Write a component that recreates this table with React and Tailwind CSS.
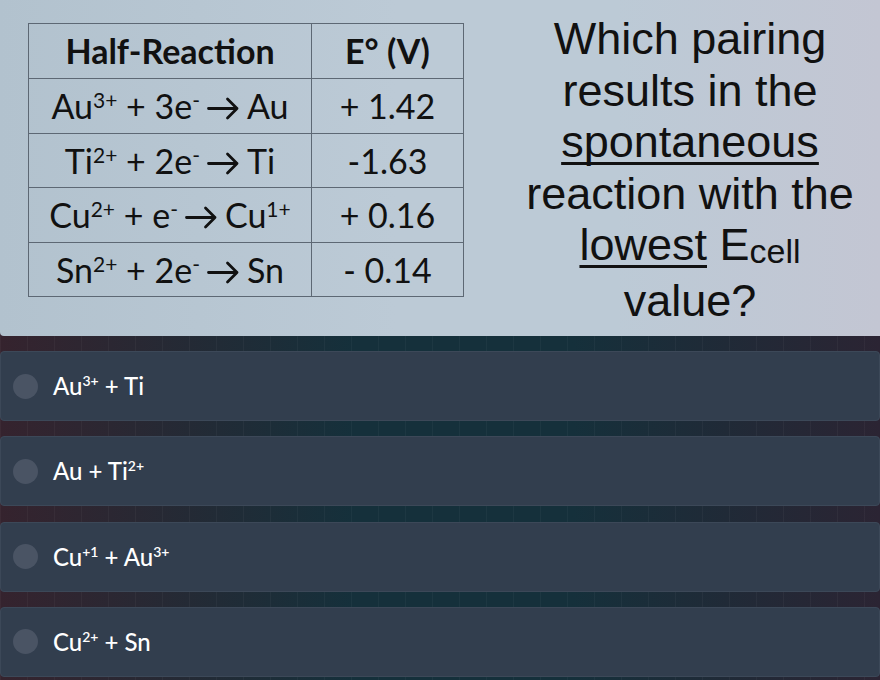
import React from 'react';

const Arrow = () => (
  <svg width="33" height="23" viewBox="0 0 33 23" className="inline-block mx-[7px] align-[-1px]">
    <path d="M1.5 11.5H30M20.5 2L30 11.5 20.5 21" fill="none" stroke="#111" strokeWidth="2.8" strokeLinecap="round" strokeLinejoin="round" />
  </svg>
);

const Sup = ({ children }) => (
  <sup className="text-[21px] relative top-[-11px] align-baseline leading-none">{children}</sup>
);

const rows = [
  { r: <>Au<Sup>3+</Sup> + 3e<Sup>-</Sup><Arrow />Au</>, v: '+ 1.42' },
  { r: <>Ti<Sup>2+</Sup> + 2e<Sup>-</Sup><Arrow />Ti</>, v: '-1.63' },
  { r: <>Cu<Sup>2+</Sup> + e<Sup>-</Sup><Arrow />Cu<Sup>1+</Sup></>, v: '+ 0.16' },
  { r: <>Sn<Sup>2+</Sup> + 2e<Sup>-</Sup><Arrow />Sn</>, v: '- 0.14' },
];

const OSup = ({ children }) => (
  <sup className="text-[14px] relative top-[-9px] align-baseline leading-none font-semibold">{children}</sup>
);

const options = [
  <>Au<OSup>3+</OSup> + Ti</>,
  <>Au + Ti<OSup>2+</OSup></>,
  <>Cu<OSup>+1</OSup> + Au<OSup>3+</OSup></>,
  <>Cu<OSup>2+</OSup> + Sn</>,
];

export default function App() {
  return (
    <div className="w-[880px] h-[680px] overflow-hidden bg-[image:repeating-linear-gradient(90deg,rgba(255,255,255,0.035)_0_1px,transparent_1px_27px),linear-gradient(90deg,#35232e,#15303b_40%,#15303b_65%,#2b2433)]">
      {/* slide picture */}
      <div className="h-[336px] flex rounded-bl-[4px] bg-[linear-gradient(90deg,#b2c2ce,#bccad6_45%,#bccad6_70%,#c3c6d3)]">
        <div className="pl-[28px] pt-[23px] font-['Lato',sans-serif] text-[#111]">
          <table className="border-collapse border-[1.5px] border-[#5d6874]">
            <thead>
              <tr className="h-[55px]">
                <th className="w-[283px] border-[1.5px] border-[#5d6874] text-[34px] font-bold leading-none">Half-Reaction</th>
                <th className="w-[152px] border-[1.5px] border-[#5d6874] text-[34px] font-bold leading-none">E° (V)</th>
              </tr>
            </thead>
            <tbody>
              {rows.map((row, i) => (
                <tr key={i} className={i % 2 ? 'h-[54px]' : 'h-[55px]'}>
                  <td className="border-[1.5px] border-[#5d6874] text-center text-[34px] leading-none whitespace-nowrap">{row.r}</td>
                  <td className="border-[1.5px] border-[#5d6874] text-center text-[34px] leading-none">{row.v}</td>
                </tr>
              ))}
            </tbody>
          </table>
        </div>
        <div className="ml-auto w-[380px] pt-[13px] text-center font-['Liberation_Sans',Arial,sans-serif] text-[45px] leading-[51.5px] text-[#111]">
          <div>Which pairing</div>
          <div>results in the</div>
          <div><span className="underline decoration-[3px] underline-offset-[5px] [text-decoration-skip-ink:none]">spontaneous</span></div>
          <div>reaction with the</div>
          <div>
            <span className="underline decoration-[3px] underline-offset-[5px] [text-decoration-skip-ink:none]">lowest</span> E<span className="text-[34px] relative top-[3px]">cell</span>
          </div>
          <div>value?</div>
        </div>
      </div>

      {/* answer options */}
      <div className="pt-[15px] flex flex-col gap-[15.3px]">
        {options.map((o, i) => (
          <div key={i} className="h-[70px] flex items-center rounded-[4px] border border-[#3c4858] bg-[#323e4e]">
            <div className="ml-[12px] w-[25px] h-[25px] rounded-full bg-[#4a5464]" />
            <div className="ml-[15px] font-['Lato',sans-serif] text-[24px] font-medium text-white">{o}</div>
          </div>
        ))}
      </div>
    </div>
  );
}
